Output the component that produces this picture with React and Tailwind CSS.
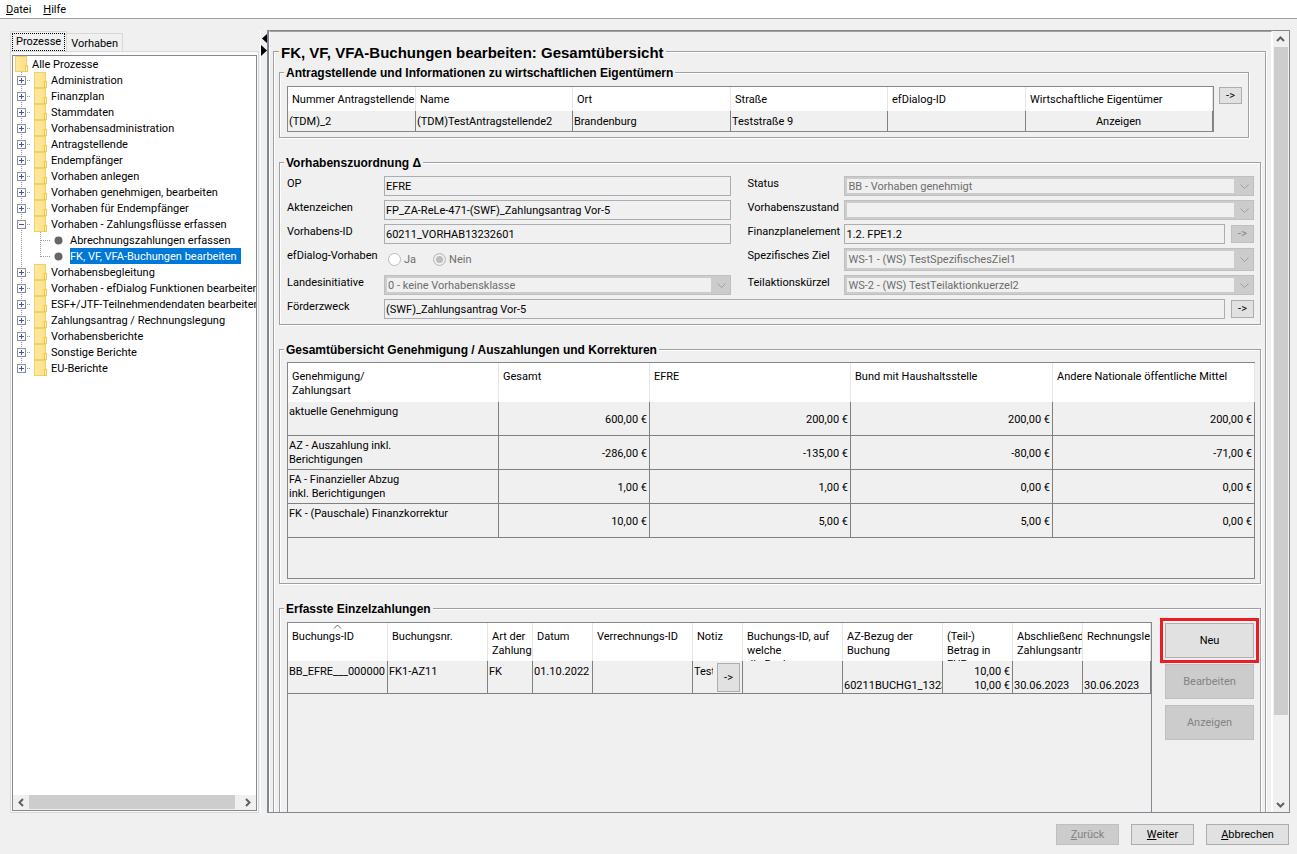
import { useState } from 'react';
import clsx from 'clsx';

const treeItems = [
    { label: 'Administration' },
    { label: 'Finanzplan' },
    { label: 'Stammdaten' },
    { label: 'Vorhabensadministration' },
    { label: 'Antragstellende' },
    { label: 'Endempfänger' },
    { label: 'Vorhaben anlegen' },
    { label: 'Vorhaben genehmigen, bearbeiten' },
    { label: 'Vorhaben für Endempfänger' },
    {
        label: 'Vorhaben - Zahlungsflüsse erfassen',
        children: ['Abrechnungszahlungen erfassen', 'FK, VF, VFA-Buchungen bearbeiten'],
    },
    { label: 'Vorhabensbegleitung' },
    { label: 'Vorhaben - efDialog Funktionen bearbeiten' },
    { label: 'ESF+/JTF-Teilnehmendendaten bearbeiten' },
    { label: 'Zahlungsantrag / Rechnungslegung' },
    { label: 'Vorhabensberichte' },
    { label: 'Sonstige Berichte' },
    { label: 'EU-Berichte' },
];

const summaryRows = [
    ['aktuelle Genehmigung', '600,00 €', '200,00 €', '200,00 €', '200,00 €'],
    ['AZ - Auszahlung inkl.\nBerichtigungen', '-286,00 €', '-135,00 €', '-80,00 €', '-71,00 €'],
    ['FA - Finanzieller Abzug\ninkl. Berichtigungen', '1,00 €', '1,00 €', '0,00 €', '0,00 €'],
    ['FK - (Pauschale) Finanzkorrektur', '10,00 €', '5,00 €', '5,00 €', '0,00 €'],
];

const paymentHeads = [
    'Buchungs-ID',
    'Buchungsnr.',
    'Art der\nZahlung',
    'Datum',
    'Verrechnungs-ID',
    'Notiz',
    'Buchungs-ID, auf\nwelche\ndie Buchung',
    'AZ-Bezug der\nBuchung',
    '(Teil-)\nBetrag in\nEUR',
    'Abschließender\nZahlungsantrag',
    'Rechnungslegung',
];

const Folder = () => (
    <svg width="13" height="16" className="shrink-0">
        <defs>
            <linearGradient id="folder">
                <stop offset="0" stopColor="#ffeaa3" />
                <stop offset="1" stopColor="#ffe083" />
            </linearGradient>
        </defs>
        <rect x="0.5" y="0.5" width="11" height="15" fill="url(#folder)" stroke="#f0d068" />
        <rect x="10.5" y="9.5" width="2" height="6" fill="#fff0b8" stroke="#ecc94f" />
    </svg>
);

const Expander = ({ open, last }) => (
    <svg width="21" height="16" className="shrink-0" shapeRendering="crispEdges">
        <path d={last ? 'M8.5 0V8' : 'M8.5 0V16'} stroke="#9a9a9a" strokeDasharray="1 1" />
        <path d="M14 8.5H17" stroke="#9a9a9a" strokeDasharray="1 1" />
        <rect x="4.5" y="4.5" width="8" height="8" fill="#fafafa" stroke="#919191" />
        <path d={open ? 'M6 8.5H11' : 'M6 8.5H11M8.5 6V11'} stroke="#3b55a5" />
    </svg>
);

const LeafMark = ({ last }) => (
    <svg width="57" height="16" className="shrink-0">
        <g stroke="#9a9a9a" strokeDasharray="1 1" shapeRendering="crispEdges">
            <path d="M8.5 0V16" />
            <path d={last ? 'M27.5 0V9' : 'M27.5 0V16'} />
            <path d="M28 8.5H37" />
        </g>
        <circle cx="45.5" cy="8.5" r="4" fill="#666" />
    </svg>
);

const Chevron = ({ d, color = '#606060', thick = 2 }) => (
    <svg width="9" height="9" viewBox="0 0 9 9" className="shrink-0">
        <path d={d} fill="none" stroke={color} strokeWidth={thick} />
    </svg>
);

const Group = ({ title, className, children }) => (
    <fieldset className={clsx('min-w-0 border border-[#a0a0a0] shadow-[1px_1px_0_#fff,inset_1px_1px_0_#fff]', className)}>
        <legend className="ml-1 h-4 bg-[#f0f0f0] px-0.5 font-['Liberation_Sans','DejaVu_Sans',sans-serif] text-[12px] leading-[18px] font-bold">
            {title}
        </legend>
        {children}
    </fieldset>
);

const PushButton = ({ className, disabled, children, ...rest }) => (
    <button
        type="button"
        disabled={disabled}
        className={clsx(
            'flex shrink-0 items-center justify-center border',
            disabled ? 'border-[#bfbfbf] bg-[#ccc] text-[#838383]' : 'border-[#adadad] bg-[#e1e1e1] text-black',
            className
        )}
        {...rest}
    >
        {children}
    </button>
);

const TextField = ({ className, ...rest }) => (
    <input
        type="text"
        readOnly
        className={clsx('h-5 min-w-0 border border-[#abadb3] bg-[#f0f0f0] px-px outline-none', className)}
        {...rest}
    />
);

const Combo = ({ id, value, className = 'h-5' }) => (
    <div className={clsx('flex min-w-0 border border-[#bfbfbf] bg-[#ccc] p-0.5', className)}>
        <select id={id} disabled className="h-full min-w-0 flex-1 appearance-none bg-[#f0f0f0] px-px pt-px text-[#6d6d6d]">
            <option>{value}</option>
        </select>
        <span className="flex w-[17px] items-center justify-center pl-1">
            <Chevron d="M0.5 2.5L4.5 6.5L8.5 2.5" color="#a0a0a0" thick={1} />
        </span>
    </div>
);

const Label = ({ className, ...rest }) => <label className={clsx('leading-4', className)} {...rest} />;

const Th = ({ className, children }) => (
    <th className={clsx('relative border-r border-[#e5e5e5] bg-white pl-1 text-left font-normal', className)}>
        {children}
    </th>
);

const Td = ({ className, children }) => (
    <td className={clsx('overflow-hidden border-r border-[#808080] pr-0.5 pl-px whitespace-pre', className)}>{children}</td>
);

const ProcessTree = () => {
    const [selected, setSelected] = useState('FK, VF, VFA-Buchungen bearbeiten');

    return (
        <ul className="min-h-0 flex-1 overflow-hidden leading-4 whitespace-nowrap">
            <li className="flex h-4 gap-1 pl-0.5">
                <Folder />
                <span className="pt-px">Alle Prozesse</span>
            </li>
            {treeItems.map((item, i) => (
                <li key={item.label}>
                    <button type="button" className="flex h-4">
                        <Expander open={!!item.children} last={i === treeItems.length - 1} />
                        <Folder />
                        <span className="pt-px pl-1">{item.label}</span>
                    </button>
                    {item.children && (
                        <ul>
                            {item.children.map((child, n) => (
                                <li key={child}>
                                    <button type="button" className="flex h-4" onClick={() => setSelected(child)}>
                                        <LeafMark last={n === item.children.length - 1} />
                                        <span className={clsx('h-4 pt-px pr-1', selected === child && 'bg-[#0078d7] text-white')}>
                                            {child}
                                        </span>
                                    </button>
                                </li>
                            ))}
                        </ul>
                    )}
                </li>
            ))}
        </ul>
    );
};

const Sidebar = () => (
    <aside className="flex w-[249px] shrink-0 flex-col pt-px">
        <div role="tablist" className="flex items-end">
            <button type="button" role="tab" aria-selected="true" className="h-5 border border-b-0 border-[#d9d9d9] p-px">
                <span className="block h-[18px] border border-dotted border-black px-[3px] leading-4">Prozesse</span>
            </button>
            <button type="button" role="tab" aria-selected="false" className="h-[18px] border border-b-0 border-l-0 border-[#d9d9d9] px-1 pt-0.5">
                Vorhaben
            </button>
        </div>
        <div className="flex min-h-0 flex-1 flex-col border border-[#d9d9d9] bg-[#fafafa] p-px pt-[3px]">
            <div className="flex min-h-0 flex-1 flex-col border border-[#828790] bg-white">
                <ProcessTree />
                <div className="flex h-[15px] items-center bg-[#f0f0f0]">
                    <span className="flex w-4 justify-center">
                        <Chevron d="M6 1L2.5 4.5L6 8" />
                    </span>
                    <span className="h-[14px] flex-1 self-start bg-[#cdcdcd]" />
                    <span className="flex w-[21px] justify-center pl-1">
                        <Chevron d="M3 1L6.5 4.5L3 8" />
                    </span>
                </div>
            </div>
        </div>
    </aside>
);

const Applicants = () => (
    <Group title="Antragstellende und Informationen zu wirtschaftlichen Eigentümern" className="mr-3">
        <div className="flex items-start gap-[5px] pt-1.5 pr-1.5 pb-[5px] pl-[7px]">
            <div className="min-w-0 flex-1 border border-[#828790]">
                <table className="w-full table-fixed border-separate border-spacing-0">
                    <colgroup>
                        <col className="w-[128px]" />
                        <col className="w-[157px]" />
                        <col className="w-[158px]" />
                        <col className="w-[157px]" />
                        <col className="w-[138px]" />
                        <col className="w-[187px]" />
                    </colgroup>
                    <thead>
                        <tr className="h-6 whitespace-nowrap">
                            <Th className="pt-0.5">Nummer Antragstellende</Th>
                            <Th className="pt-0.5">Name</Th>
                            <Th className="pt-0.5">Ort</Th>
                            <Th className="pt-0.5">Straße</Th>
                            <Th className="pt-0.5">efDialog-ID</Th>
                            <Th className="pt-0.5">Wirtschaftliche Eigentümer</Th>
                        </tr>
                    </thead>
                    <tbody>
                        <tr className="h-5">
                            <Td className="pt-0.5">(TDM)_2</Td>
                            <Td className="pt-0.5">(TDM)TestAntragstellende2</Td>
                            <Td className="pt-0.5">Brandenburg</Td>
                            <Td className="pt-0.5">Teststraße 9</Td>
                            <Td />
                            <Td className="pt-0.5 text-center">Anzeigen</Td>
                        </tr>
                    </tbody>
                </table>
            </div>
            <PushButton className="mt-px h-[17px] w-[23px]">-&gt;</PushButton>
        </div>
    </Group>
);

const Assignment = () => (
    <Group title="Vorhabenszuordnung Δ">
        <div className="grid grid-cols-[97px_347fr_113px_409fr] gap-y-1 pt-1.5 pr-1.5 pb-[5px] pl-[7px]">
            <Label htmlFor="op">OP</Label>
            <TextField id="op" value="EFRE" />
            <Label htmlFor="status" className="pl-4">Status</Label>
            <Combo id="status" value="BB - Vorhaben genehmigt" />

            <Label htmlFor="az">Aktenzeichen</Label>
            <TextField id="az" value="FP_ZA-ReLe-471-(SWF)_Zahlungsantrag Vor-5" />
            <Label htmlFor="zustand" className="pl-4">Vorhabenszustand</Label>
            <Combo id="zustand" value="" />

            <Label htmlFor="vid">Vorhabens-ID</Label>
            <TextField id="vid" value="60211_VORHAB13232601" />
            <Label htmlFor="fpe" className="pl-4">Finanzplanelement</Label>
            <div className="flex items-center gap-1.5">
                <TextField id="fpe" className="flex-1" value="1.2. FPE1.2" />
                <PushButton disabled className="h-[18px] w-[23px]">-&gt;</PushButton>
            </div>

            <span className="leading-4">efDialog-Vorhaben</span>
            <div className="flex h-[23px] items-center gap-[17px] pl-1 text-[#6d6d6d]">
                {['Ja', 'Nein'].map((option) => (
                    <label key={option} className="flex items-center gap-[3px]">
                        <input
                            type="radio"
                            name="efdialog"
                            disabled
                            defaultChecked={option === 'Nein'}
                            className="h-[13px] w-[13px] appearance-none rounded-full border border-[#bcbcbc] bg-white checked:bg-[#bcbcbc] checked:shadow-[inset_0_0_0_2px_#f0f0f0]"
                        />
                        {option}
                    </label>
                ))}
            </div>
            <Label htmlFor="ziel" className="pl-4">Spezifisches Ziel</Label>
            <Combo id="ziel" value="WS-1 - (WS) TestSpezifischesZiel1" className="h-[23px]" />

            <Label htmlFor="landes">Landesinitiative</Label>
            <Combo id="landes" value="0 - keine Vorhabensklasse" />
            <Label htmlFor="teil" className="pl-4">Teilaktionskürzel</Label>
            <Combo id="teil" value="WS-2 - (WS) TestTeilaktionkuerzel2" />

            <Label htmlFor="zweck">Förderzweck</Label>
            <div className="col-span-3 flex items-center gap-1.5">
                <TextField id="zweck" className="flex-1" value="(SWF)_Zahlungsantrag Vor-5" />
                <PushButton className="h-[18px] w-[23px]">-&gt;</PushButton>
            </div>
        </div>
    </Group>
);

const Summary = () => (
    <Group title="Gesamtübersicht Genehmigung / Auszahlungen und Korrekturen">
        <div className="pt-[5px] pr-[5px] pb-1 pl-[7px]">
            <div className="h-[217px] border border-[#828790]">
                <table className="w-full table-fixed border-separate border-spacing-0">
                    <colgroup>
                        <col className="w-[211px]" />
                        <col className="w-[151px]" />
                        <col className="w-[201px]" />
                        <col className="w-[202px]" />
                        <col className="w-[202px]" />
                    </colgroup>
                    <thead>
                        <tr className="h-[39px] whitespace-pre">
                            {['Genehmigung/\nZahlungsart', 'Gesamt', 'EFRE', 'Bund mit Haushaltsstelle', 'Andere Nationale öffentliche Mittel'].map((head) => (
                                <Th key={head} className="pt-[7px] align-top">{head}</Th>
                            ))}
                        </tr>
                    </thead>
                    <tbody>
                        {summaryRows.map(([label, ...amounts]) => (
                            <tr key={label} className="h-[34px]">
                                <Td className="border-b pt-[3px] align-top">{label}</Td>
                                {amounts.map((amount, i) => (
                                    <Td key={i} className="border-b pt-0.5 text-right">{amount}</Td>
                                ))}
                            </tr>
                        ))}
                    </tbody>
                </table>
            </div>
        </div>
    </Group>
);

const Payments = () => (
    <Group title="Erfasste Einzelzahlungen">
        <div className="flex gap-[13px] pt-1.5 pr-1.5 pb-[5px] pl-[7px]">
            <div className="h-[240px] min-w-0 flex-1 border border-[#828790]">
                <table className="w-full table-fixed border-separate border-spacing-0">
                    <colgroup>
                        <col className="w-[100px]" />
                        <col className="w-[100px]" />
                        <col className="w-[45px]" />
                        <col className="w-[60px]" />
                        <col className="w-[100px]" />
                        <col className="w-[50px]" />
                        <col className="w-[100px]" />
                        <col className="w-[100px]" />
                        <col className="w-[70px]" />
                        <col className="w-[70px]" />
                        <col className="w-[68px]" />
                    </colgroup>
                    <thead>
                        <tr>
                            {paymentHeads.map((head, i) => (
                                <Th key={head}>
                                    {i === 0 && (
                                        <svg width="9" height="5" className="absolute top-px left-[45px]">
                                            <path d="M1 4.5L4.5 1L8 4.5" fill="none" stroke="#606060" />
                                        </svg>
                                    )}
                                    <div className="h-[38px] overflow-hidden pt-[7px] whitespace-pre">{head}</div>
                                </Th>
                            ))}
                        </tr>
                    </thead>
                    <tbody>
                        <tr className="h-[33px] align-top">
                            <Td className="border-b pt-1">BB_EFRE___000000</Td>
                            <Td className="border-b pt-1">FK1-AZ11</Td>
                            <Td className="border-b pt-1">FK</Td>
                            <Td className="border-b pt-1">01.10.2022</Td>
                            <Td className="border-b pt-1" />
                            <Td className="border-b pt-0.5">
                                <div className="flex h-[29px] justify-between">
                                    <span className="w-[19px] overflow-hidden pt-0.5">Test</span>
                                    <PushButton className="h-[29px] w-[23px]">-&gt;</PushButton>
                                </div>
                            </Td>
                            <Td className="border-b pt-1" />
                            <Td className="border-b pt-1">{'\n60211BUCHG1_13232601'}</Td>
                            <Td className="border-b pt-1 text-right">{'10,00 €\n10,00 €'}</Td>
                            <Td className="border-b pt-1">{'\n30.06.2023'}</Td>
                            <Td className="border-b pt-1">{'\n30.06.2023'}</Td>
                        </tr>
                    </tbody>
                </table>
            </div>
            <div className="flex w-[89px] shrink-0 flex-col gap-1.5 pt-px">
                <div className="relative">
                    <PushButton className="h-[35px] w-full">Neu</PushButton>
                    <span className="pointer-events-none absolute -inset-[5px] border-3 border-[#ed1c24]" />
                </div>
                <PushButton disabled className="h-[35px]">Bearbeiten</PushButton>
                <PushButton disabled className="h-[35px]">Anzeigen</PushButton>
            </div>
        </div>
    </Group>
);

const App = () => (
    <div className="flex h-screen flex-col overflow-hidden bg-[#f0f0f0] font-[Roboto,'Liberation_Sans',sans-serif] text-[11px] leading-[14px] text-black">
        <nav className="flex h-[19px] shrink-0 items-center gap-3 border-b border-[#a0a0a0] bg-white pt-0.5 pl-1.5">
            <button type="button"><u>D</u>atei</button>
            <button type="button"><u>H</u>ilfe</button>
        </nav>

        <div className="flex min-h-0 flex-1 pt-[11px] pr-[7px] pl-2.5">
            <Sidebar />

            {/* Splitter */}
            <div className="flex w-2 shrink-0 flex-col pl-px">
                <svg width="7" height="27" className="border-l border-white">
                    <path d="M7 3V14L1 8.5ZM0 15V26L6 20.5Z" />
                </svg>
                <span className="flex-1 border-l border-white" />
            </div>

            <main className="flex min-w-0 flex-1 border border-l-2 border-[#828790]">
                <div className="min-w-0 flex-1 overflow-hidden border-t border-r border-l border-t-[#a0a0a0] border-r-white border-l-white pt-[9px] pr-[5px] pl-[3px]">
                    <fieldset className="min-w-0 border border-[#a0a0a0] pr-1 pb-2 pl-[5px] shadow-[1px_1px_0_#fff,inset_1px_1px_0_#fff]">
                        <legend className="h-5 bg-[#f0f0f0] px-0.5 font-['Liberation_Sans',Arial,sans-serif] text-[15px] leading-6 font-bold">
                            FK, VF, VFA-Buchungen bearbeiten: Gesamtübersicht
                        </legend>
                        <div className="flex flex-col gap-4 pt-[3px]">
                            <Applicants />
                            <Assignment />
                            <Summary />
                            <Payments />
                        </div>
                    </fieldset>
                </div>
                <div className="flex w-[17px] shrink-0 flex-col items-center border-l border-white pr-px">
                    <span className="flex h-4 items-center">
                        <Chevron d="M1 6L4.5 2.5L8 6" />
                    </span>
                    <span className="w-[14px] flex-[667] bg-[#cdcdcd]" />
                    <span className="flex-[81]" />
                    <span className="flex h-4 items-center">
                        <Chevron d="M1 3L4.5 6.5L8 3" />
                    </span>
                </div>
            </main>
        </div>

        <footer className="flex h-[41px] shrink-0 justify-end gap-3 pt-[11px] pr-2">
            <PushButton disabled className="h-[21px] w-[63px]"><span><u>Z</u>urück</span></PushButton>
            <PushButton className="h-[21px] w-[63px]"><span><u>W</u>eiter</span></PushButton>
            <PushButton className="h-[21px] w-[83px]"><span><u>A</u>bbrechen</span></PushButton>
        </footer>
    </div>
);

export default App;
